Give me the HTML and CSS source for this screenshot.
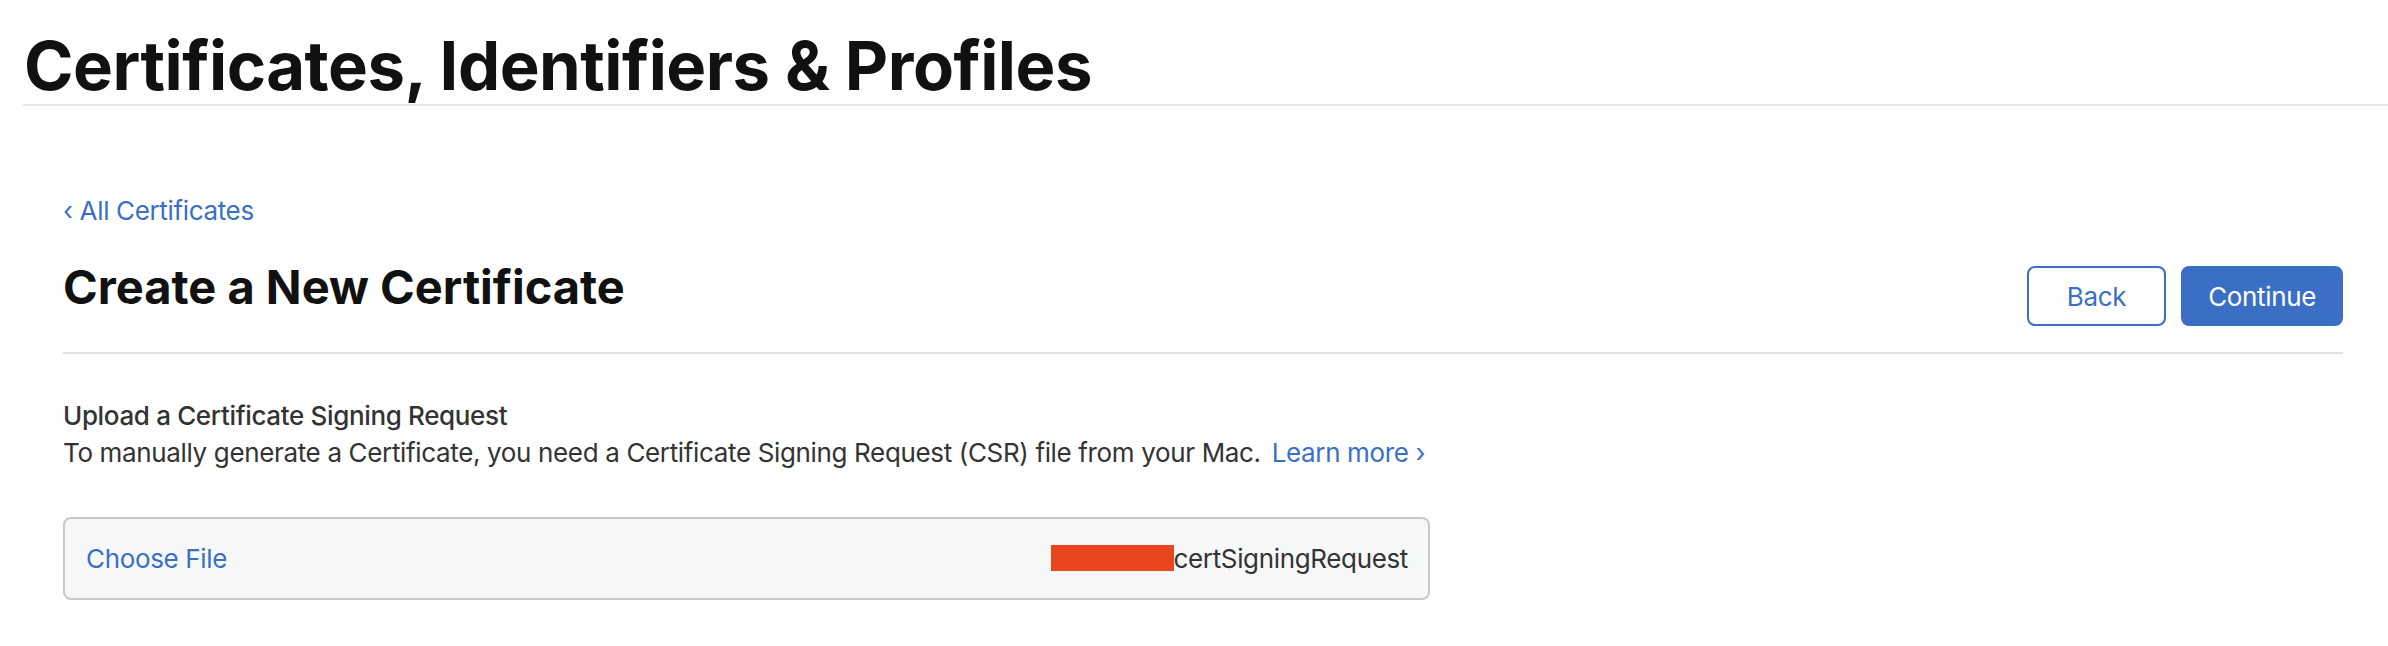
FILE: index.html
```html
<!DOCTYPE html>
<html lang="en">
<head>
<meta charset="utf-8">
<title>Certificates, Identifiers &amp; Profiles</title>
<link rel="stylesheet" href="styles.css">
</head>
<body>
<header class="site-header">
  <h1 class="site-title">Certificates, Identifiers &amp; Profiles</h1>
</header>
<main class="content">
  <a class="back-link" href="#"><span class="chev">‹</span> All Certificates</a>
  <div class="page-head">
    <h2 class="page-title">Create a New Certificate</h2>
    <div class="actions">
      <button class="btn btn-outline" type="button">Back</button>
      <button class="btn btn-primary" type="button">Continue</button>
    </div>
  </div>
  <section class="upload">
    <h3 class="upload-title">Upload a Certificate Signing Request</h3>
    <p class="upload-desc">To manually generate a Certificate, you need a Certificate Signing Request (CSR) file from your Mac. <a class="learn" href="#">Learn more ›</a></p>
    <div class="file-box">
      <a class="choose" href="#">Choose File</a>
      <span class="file-name"><span class="redact"></span>certSigningRequest</span>
    </div>
  </section>
</main>
</body>
</html>
```

FILE: styles.css
```css
* { box-sizing: border-box; }
html, body { margin: 0; padding: 0; background: #fff; }
body {
  font-family: Inter, "Noto Sans", "Liberation Sans", sans-serif;
  color: #333;
  letter-spacing: -0.35px;
}
a { text-decoration: none; color: #3a6fc5; }

.site-header {
  margin-left: 23px;
  border-bottom: 2px solid #e6e6e6;
}
.site-title {
  margin: 0;
  padding: 28px 0 0 1px;
  font-size: 67px;
  line-height: 76px;
  font-weight: 700;
  color: #111;
  letter-spacing: -0.5px;
}

.content {
  padding: 0 45px 0 63px;
}
.back-link {
  display: inline-block;
  margin-top: 89px;
  font-size: 26px;
  line-height: 32px;
}
.back-link .chev { font-size: 26px; }

.page-head {
  margin-top: 39px;
  display: flex;
  justify-content: space-between;
  align-items: flex-start;
  padding-bottom: 26px;
  border-bottom: 2px solid #e1e1e1;
}
.page-title {
  margin: 0;
  font-size: 47px;
  line-height: 42px;
  font-weight: 700;
  color: #111;
  letter-spacing: 0;
}
.actions { display: flex; gap: 15px; }
.btn {
  height: 60px;
  border-radius: 8px;
  font-family: inherit;
  font-size: 26px;
  letter-spacing: -0.35px;
  border: 2px solid #3a6fc5;
  cursor: pointer;
}
.btn-outline { background: #fff; color: #3a6fc5; padding: 0 38px; }
.btn-primary { background: #3a6fc5; color: #fff; padding: 0 25px; }

.upload { padding-top: 43px; }
.upload-title {
  margin: 0;
  font-size: 26px;
  line-height: 37px;
  font-weight: 500;
  color: #333;
}
.upload-desc {
  margin: 0;
  font-size: 26px;
  line-height: 37px;
}
.learn { margin-left: 4px; }

.file-box {
  margin-top: 46px;
  width: 1367px;
  height: 83px;
  display: flex;
  justify-content: space-between;
  align-items: center;
  padding: 0 20px 0 21px;
  background: #f6f8f8;
  border: 2px solid #c9c9c9;
  border-radius: 8px;
  font-size: 26px;
  line-height: 37px;
}
.file-name { color: #333; }
.redact {
  display: inline-block;
  width: 123px;
  height: 26px;
  background: #e8461f;
  vertical-align: -3px;
}
```
